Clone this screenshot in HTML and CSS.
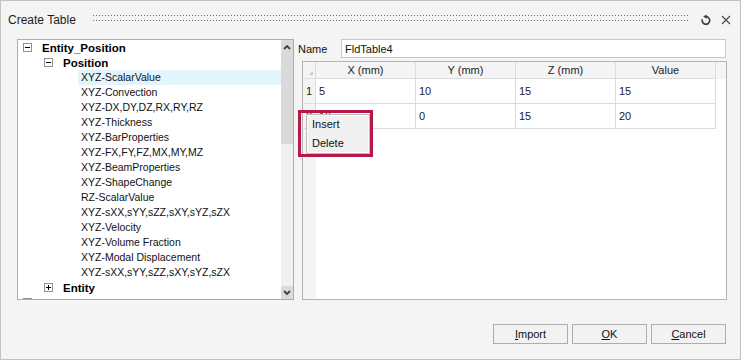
FILE: index.html
```html
<!DOCTYPE html>
<html lang="en">

<head>
    <meta charset="UTF-8">
    <title>Create Table</title>
    <link rel="stylesheet" href="styles.css">
</head>

<body>
    <div class="dialog">
        <div class="titlebar">
            <span class="title">Create Table</span>
            <div class="grip"></div>
            <svg class="icon-refresh" width="12" height="12" viewBox="0 0 12 12">
                <path d="M6 2.6 A3.8 3.8 0 1 1 2.3 5.2" fill="none" stroke="#3a3a3a" stroke-width="1.6" />
                <polygon points="3.2,2.6 6.6,0.4 6.6,4.8" fill="#3a3a3a" />
            </svg>
            <svg class="icon-close" width="10" height="10" viewBox="0 0 10 10">
                <path d="M1 1 L9 9 M9 1 L1 9" stroke="#4a4a4a" stroke-width="1.2" />
            </svg>
        </div>

        <div class="main">
            <div class="tree">
                <div class="tree-body">
                    <div class="node level0"><span class="expander minus"></span><b>Entity_Position</b></div>
                    <div class="node level1"><span class="expander minus"></span><b>Position</b></div>
                    <div class="node leaf"><span class="leaf-text selected">XYZ-ScalarValue</span></div>
                    <div class="node leaf"><span class="leaf-text">XYZ-Convection</span></div>
                    <div class="node leaf"><span class="leaf-text">XYZ-DX,DY,DZ,RX,RY,RZ</span></div>
                    <div class="node leaf"><span class="leaf-text">XYZ-Thickness</span></div>
                    <div class="node leaf"><span class="leaf-text">XYZ-BarProperties</span></div>
                    <div class="node leaf"><span class="leaf-text">XYZ-FX,FY,FZ,MX,MY,MZ</span></div>
                    <div class="node leaf"><span class="leaf-text">XYZ-BeamProperties</span></div>
                    <div class="node leaf"><span class="leaf-text">XYZ-ShapeChange</span></div>
                    <div class="node leaf"><span class="leaf-text">RZ-ScalarValue</span></div>
                    <div class="node leaf"><span class="leaf-text">XYZ-sXX,sYY,sZZ,sXY,sYZ,sZX</span></div>
                    <div class="node leaf"><span class="leaf-text">XYZ-Velocity</span></div>
                    <div class="node leaf"><span class="leaf-text">XYZ-Volume Fraction</span></div>
                    <div class="node leaf"><span class="leaf-text">XYZ-Modal Displacement</span></div>
                    <div class="node leaf"><span class="leaf-text">XYZ-sXX,sYY,sZZ,sXY,sYZ,sZX</span></div>
                    <div class="node level1"><span class="expander plus"></span><b>Entity</b></div>
                    <div class="node level0"><span class="expander minus"></span><b>Material</b></div>
                </div>
                <div class="scrollbar">
                    <div class="sb-thumb">
                        <svg width="8" height="6" viewBox="0 0 8 6"><path d="M1 5 L4 2 L7 5" fill="none" stroke="#404040" stroke-width="1.8" /></svg>
                    </div>
                    <div class="sb-track"></div>
                    <div class="sb-button">
                        <svg width="8" height="6" viewBox="0 0 8 6"><path d="M1 1 L4 4 L7 1" fill="none" stroke="#404040" stroke-width="1.8" /></svg>
                    </div>
                </div>
            </div>

            <div class="editor">
                <div class="name-row">
                    <label for="tableName">Name</label>
                    <input id="tableName" class="name-input" type="text" value="FldTable4">
                </div>

                <div class="grid">
                    <div class="grid-row grid-head">
                        <div class="cell corner"><span class="corner-mark"></span></div>
                        <div class="cell head">X (mm)</div>
                        <div class="cell head">Y (mm)</div>
                        <div class="cell head">Z (mm)</div>
                        <div class="cell head">Value</div>
                    </div>
                    <div class="grid-row">
                        <div class="cell rowhead">1</div>
                        <div class="cell">5</div>
                        <div class="cell">10</div>
                        <div class="cell">15</div>
                        <div class="cell">15</div>
                    </div>
                    <div class="grid-row">
                        <div class="cell rowhead">2</div>
                        <div class="cell">10</div>
                        <div class="cell">0</div>
                        <div class="cell">15</div>
                        <div class="cell">20</div>
                    </div>
                </div>

                <div class="highlight-box">
                    <div class="context-menu">
                        <div class="menu-item">Insert</div>
                        <div class="menu-item">Delete</div>
                    </div>
                </div>
            </div>
        </div>

        <div class="footer">
            <button class="btn"><u>I</u>mport</button>
            <button class="btn"><u>O</u>K</button>
            <button class="btn"><u>C</u>ancel</button>
        </div>
    </div>
</body>

</html>
```

FILE: styles.css
```css
* {
    box-sizing: border-box;
}

body {
    margin: 0;
    font-family: "Liberation Sans", Arial, sans-serif;
    font-size: 11px;
    color: #000;
    background: #fff;
}

.dialog {
    width: 741px;
    height: 360px;
    background: #f4f4f4;
    border: 1px solid #c3c3c3;
    display: flex;
    flex-direction: column;
}

/* title bar */
.titlebar {
    height: 38px;
    display: flex;
    align-items: center;
    padding: 0 9px 0 7px;
}

.title {
    font-size: 12px;
    color: #1e1e1e;
}

.grip {
    flex: 1;
    align-self: flex-start;
    height: 7px;
    margin: 14px 12px 0 17px;
    background:
        linear-gradient(90deg, transparent 1px, #f4f4f4 1px) 0 0 / 3px 5px,
        linear-gradient(transparent 1px, #f4f4f4 1px) 0 0 / 3px 5px,
        #6c6c6c;
}

.icon-refresh {
    margin-right: 9px;
}

/* main area */
.main {
    display: flex;
    height: 261px;
    padding: 0 13px 0 16px;
    gap: 4px;
}

.tree {
    width: 277px;
    border: 1px solid #adadad;
    background: #fff;
    display: flex;
    overflow: hidden;
}

.tree-body {
    flex: 1;
    overflow: hidden;
}

.node {
    height: 15px;
    display: flex;
    align-items: center;
    white-space: nowrap;
    font-size: 10.5px;
    color: #111;
}

.node b {
    font-size: 11.5px;
    color: #000;
}

.level0 {
    padding-left: 5px;
}

.level1 {
    padding-left: 26px;
}

.leaf {
    padding-left: 60px;
}

.leaf-text {
    flex: 1;
    height: 15px;
    line-height: 15px;
    padding-left: 3px;
}

.leaf-text.selected {
    background: #e3f4fc;
}

.expander {
    width: 9px;
    height: 9px;
    border: 1px solid #919191;
    margin-right: 10px;
    position: relative;
    background: #fff;
}

.expander::before {
    content: "";
    position: absolute;
    left: 1px;
    top: 3px;
    width: 5px;
    height: 1px;
    background: #000;
}

.expander.plus::after {
    content: "";
    position: absolute;
    left: 3px;
    top: 1px;
    width: 1px;
    height: 5px;
    background: #000;
}

.scrollbar {
    width: 12px;
    display: flex;
    flex-direction: column;
    background: #f0f0f0;
}

.sb-thumb {
    height: 104px;
    background: #dadada;
    display: flex;
    justify-content: center;
    padding-top: 4px;
}

.sb-track {
    flex: 1;
}

.sb-button {
    height: 13px;
    background: #dadada;
    display: flex;
    justify-content: center;
    align-items: center;
}

/* editor */
.editor {
    flex: 1;
    display: flex;
    flex-direction: column;
    position: relative;
}

.name-row {
    display: flex;
    align-items: center;
    height: 19px;
}

.name-row label {
    width: 43px;
    color: #111;
}

.name-input {
    flex: 1;
    height: 19px;
    margin-right: 1px;
    border: 1px solid #c9c9c9;
    background: #fff;
    padding: 0 3px;
    font: inherit;
    color: #111;
    outline: none;
}

.grid {
    flex: 1;
    margin: 3px 0 0 4px;
    border: 1px solid #b3b3b3;
    background: linear-gradient(90deg, #f4f4f4 13px, #fff 13px);
}

.grid-row {
    display: flex;
    height: 25px;
}

.grid-head {
    height: 17px;
    background: #f4f4f4;
}

.cell {
    width: 100px;
    border-right: 1px solid #dcdcdc;
    border-bottom: 1px solid #dcdcdc;
    padding-left: 3px;
    display: flex;
    align-items: center;
    color: #1a1a2a;
    background: #fff;
}

.head {
    justify-content: center;
    padding-left: 0;
    background: #f4f4f4;
    color: #222;
}

.corner,
.rowhead {
    width: 13px;
    background: #f4f4f4;
    position: relative;
}

.corner-mark {
    position: absolute;
    right: 2px;
    bottom: 3px;
    border-left: 4px solid transparent;
    border-bottom: 4px solid #c8c8c8;
}

/* context menu with the red marking box */
.highlight-box {
    position: absolute;
    left: 0;
    top: 71px;
    width: 75px;
    height: 47px;
    border: 3px solid #b41a45;
}

.context-menu {
    position: absolute;
    left: 5px;
    top: 1px;
    width: 64px;
    height: 40px;
    background: #f0f0f0;
    border: 1px solid #bcbcbc;
    box-shadow: inset 0 0 0 1px #fafafa;
}

.menu-item {
    height: 19px;
    line-height: 19px;
    padding-left: 5px;
    color: #111;
}

/* buttons */
.footer {
    display: flex;
    justify-content: flex-end;
    gap: 4px;
    padding: 24px 14px 0 0;
}

.btn {
    width: 75px;
    height: 20px;
    border: 1px solid #adadad;
    background: #f2f2f2;
    font: inherit;
    color: #111;
    padding: 0;
}
```
